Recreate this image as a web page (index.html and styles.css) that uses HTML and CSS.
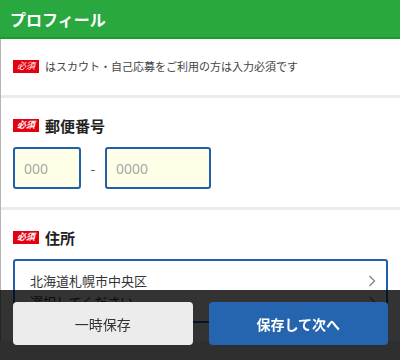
FILE: index.html
```html
<!DOCTYPE html>
<html lang="ja">
<head>
    <meta charset="UTF-8">
    <meta name="viewport" content="width=device-width, initial-scale=1.0">
    <title>プロフィール</title>
    <link rel="stylesheet" href="styles.css">
</head>
<body>
    <header class="header">
        <h1>プロフィール</h1>
    </header>

    <div class="page">
        <section class="section note">
            <span class="badge">必須</span>
            <p>はスカウト・自己応募をご利用の方は入力必須です</p>
        </section>

        <section class="section">
            <h2 class="label"><span class="badge">必須</span>郵便番号</h2>
            <div class="zip">
                <input class="zip-input zip-first" type="text" placeholder="000">
                <span class="dash">-</span>
                <input class="zip-input zip-second" type="text" placeholder="0000">
            </div>
        </section>

        <section class="section">
            <h2 class="label"><span class="badge">必須</span>住所</h2>
            <div class="select-box">
                <div class="select-row">
                    <span>北海道札幌市中央区</span>
                    <svg class="chevron" width="8" height="12" viewBox="0 0 8 12"><polyline points="1.5,1 6.5,6 1.5,11" fill="none" stroke="#888" stroke-width="1.4"/></svg>
                </div>
                <div class="select-row">
                    <span>選択してください</span>
                    <svg class="chevron" width="8" height="12" viewBox="0 0 8 12"><polyline points="1.5,1 6.5,6 1.5,11" fill="none" stroke="#888" stroke-width="1.4"/></svg>
                </div>
            </div>
        </section>
    </div>

    <footer class="actions">
        <button class="btn btn-draft">一時保存</button>
        <button class="btn btn-next">保存して次へ</button>
    </footer>
</body>
</html>
```

FILE: styles.css
```css
body {
    margin: 0;
    padding: 0;
    font-family: "Noto Sans CJK JP", "Noto Sans", sans-serif;
    color: #333;
    background-color: #ebebeb;
}
.header {
    height: 37px;
    background-color: #29a83f;
    border-bottom: 2px solid #1d9932;
    display: flex;
    align-items: center;
    padding-left: 10px;
}
.header h1 {
    margin: 0;
    font-size: 16px;
    font-weight: bold;
    color: #fff;
    line-height: 1;
}
.page {
    border-left: 1px solid #b5b5b5;
    display: flex;
    flex-direction: column;
    gap: 3px;
}
.section {
    background-color: #fff;
    padding: 19px 12px 18px 12px;
}
.note {
    display: flex;
    align-items: center;
    gap: 6px;
    padding-top: 20px;
    padding-bottom: 22px;
}
.note p {
    margin: 0;
    font-size: 11px;
    line-height: 14px;
    color: #444;
}
.badge {
    display: inline-flex;
    align-items: center;
    justify-content: center;
    width: 26px;
    height: 13px;
    background-color: #e3000f;
    color: #fff;
    font-family: "Liberation Serif", "Noto Sans CJK JP", serif;
    font-style: italic;
    font-size: 9px;
    line-height: 1;
    flex-shrink: 0;
}
.label {
    display: flex;
    align-items: center;
    gap: 6px;
    margin: 0;
    height: 16px;
    font-size: 15px;
    font-weight: bold;
    color: #222;
}
.zip {
    display: flex;
    align-items: center;
    margin-top: 14px;
}
.zip-input {
    box-sizing: border-box;
    height: 42px;
    border: 2px solid #1f5fae;
    border-radius: 3px;
    background-color: #fffee6;
    padding: 0 0 0 9px;
    font-family: "Noto Sans", sans-serif;
    font-size: 14px;
    color: #333;
}
.zip-input::placeholder {
    color: #a8a8a8;
}
.zip-first {
    width: 68px;
}
.zip-second {
    width: 106px;
}
.dash {
    width: 24px;
    text-align: center;
    font-size: 14px;
    color: #555;
}
.select-box {
    margin-top: 14px;
    border: 2px solid #1f5fae;
    border-radius: 3px;
    padding: 9px 0;
}
.select-row {
    display: flex;
    justify-content: space-between;
    align-items: center;
    height: 21px;
    padding: 0 10px 0 15px;
    font-size: 13px;
    color: #333;
}
.actions {
    position: fixed;
    left: 0;
    right: 0;
    bottom: 0;
    height: 70px;
    box-sizing: border-box;
    padding: 12px 12px 15px 13px;
    background-color: rgba(0, 0, 0, 0.8);
    display: flex;
    gap: 16px;
}
.btn {
    flex: 1;
    border: none;
    border-radius: 4px;
    font-family: "Noto Sans CJK JP", sans-serif;
    font-size: 14px;
    cursor: pointer;
}
.btn-draft {
    background-color: #ececec;
    color: #333;
}
.btn-next {
    background-color: #2564ae;
    color: #fff;
    font-weight: bold;
}
```
